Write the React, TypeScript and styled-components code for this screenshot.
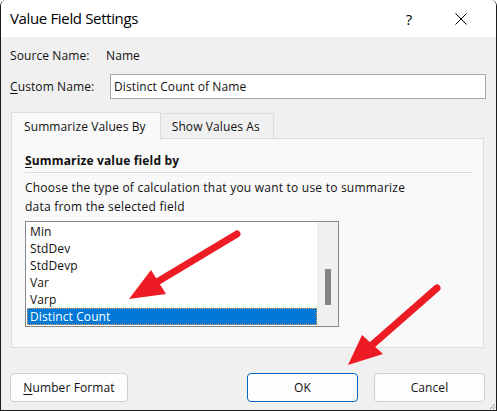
import React from 'react';
import styled, { createGlobalStyle } from 'styled-components';

const GlobalStyle = createGlobalStyle`
  html, body {
    margin: 0;
    padding: 0;
    background: #ffffff;
  }
  * {
    box-sizing: border-box;
  }
`;

const Window = styled.div`
  position: relative;
  width: 497px;
  height: 411px;
  display: flex;
  flex-direction: column;
  border: 1px solid #1c1c1c;
  border-top: none;
  border-radius: 6px 6px 0 0;
  overflow: hidden;
  font-family: 'Open Sans', 'Noto Sans', Arial, sans-serif;
  font-size: 12px;
  letter-spacing: 0.1px;
  color: #111;
`;

const TitleBar = styled.div`
  height: 37px;
  flex: none;
  display: flex;
  align-items: center;
  padding-left: 9px;
  background: #ffffff;
`;

const Title = styled.div`
  flex: 1;
  font-size: 15px;
  letter-spacing: -0.35px;
  color: #000;
  padding-bottom: 1px;
`;

const TitleButton = styled.div<{ $w: number }>`
  width: ${(p) => p.$w}px;
  height: 37px;
  display: flex;
  align-items: center;
  justify-content: center;
  font-size: 15px;
  color: #000;
`;

const Body = styled.div`
  flex: 1;
  display: flex;
  flex-direction: column;
  background: #f0f0f0;
  padding: 10px 10px 8px 9px;
`;

const FieldRow = styled.div<{ $h: number; $gap?: number }>`
  display: flex;
  align-items: center;
  height: ${(p) => p.$h}px;
  margin-top: ${(p) => p.$gap ?? 0}px;
`;

const Label = styled.div`
  width: 96px;
  flex: none;
`;

const Value = styled.div`
  flex: 1;
`;

const TextInput = styled.div`
  flex: 1;
  height: 25px;
  margin-left: 4px;
  display: flex;
  align-items: center;
  padding-left: 3px;
  background: #fff;
  border: 1px solid #a8a8a8;
`;

const Key = styled.span`
  text-decoration: underline;
  text-underline-offset: 2px;
`;

const TabStrip = styled.div`
  display: flex;
  align-items: flex-end;
  margin-top: 12px;
  height: 27px;
  padding-left: 1px;
`;

const Tab = styled.div<{ $active?: boolean }>`
  height: ${(p) => (p.$active ? 27 : 25)}px;
  display: flex;
  align-items: center;
  padding: ${(p) => (p.$active ? '0 14px 0 12px' : '0 13px 0 11px')};
  background: ${(p) => (p.$active ? '#f9f9f9' : '#f0f0f0')};
  border: 1px solid #dcdcdc;
  border-bottom: none;
  ${(p) => (p.$active ? 'margin-bottom: -1px; position: relative; z-index: 1; border-right: none;' : '')}
`;

const Panel = styled.div`
  height: 210px;
  margin-left: 1px;
  margin-right: 2px;
  background: #f9f9f9;
  border: 1px solid #dcdcdc;
  padding: 13px 10px 0 13px;
`;

const Heading = styled.div`
  font-weight: 700;
  letter-spacing: 0.15px;
  height: 17px;
  line-height: 17px;
  padding-bottom: 3px;
  box-sizing: content-box;
  border-bottom: 1px solid #d9d9d9;
`;

const Hint = styled.div`
  margin-top: 5px;
  line-height: 19px;
  letter-spacing: 0.22px;
  max-width: 392px;
`;

const ListBox = styled.div`
  margin-top: 5px;
  width: 314px;
  height: 106px;
  display: flex;
  background: #fff;
  border: 1px solid #828790;
  padding: 1px 0 0 1px;
`;

const Items = styled.div`
  flex: 1;
  display: flex;
  flex-direction: column;
`;

const Item = styled.div<{ $selected?: boolean }>`
  height: 17px;
  line-height: 17px;
  padding-left: 3px;
  ${(p) =>
    p.$selected
      ? 'background: #0078d7; color: #fff; outline: 1px dotted #f5a04c; outline-offset: -1px;'
      : ''}
`;

const ScrollTrack = styled.div`
  width: 21px;
  margin-top: -1px;
  background: #f0f0f0;
  display: flex;
  justify-content: center;
`;

const ScrollThumb = styled.div`
  width: 6px;
  height: 36px;
  margin-top: 47px;
  margin-left: 1px;
  background: #858585;
`;

const ButtonRow = styled.div`
  display: flex;
  align-items: center;
  gap: 16px;
  margin-top: 25px;
  margin-right: 1px;
`;

const Spacer = styled.div`
  flex: 1;
`;

const Button = styled.div<{ $w: number; $primary?: boolean }>`
  width: ${(p) => p.$w}px;
  height: 29px;
  display: flex;
  align-items: center;
  justify-content: center;
  background: #fdfdfd;
  border: 1px solid ${(p) => (p.$primary ? '#0067c0' : '#d0d0d0')};
  border-radius: 4px;
`;

const Overlay = styled.svg`
  position: absolute;
  left: -1px;
  top: 0;
  pointer-events: none;
`;

const Grip = styled.svg`
  position: absolute;
  right: 0;
  bottom: 0;
`;

const items = ['Min', 'StdDev', 'StdDevp', 'Var', 'Varp', 'Distinct Count'];

const App: React.FC = () => {
  return (
    <Window>
      <GlobalStyle />
      <TitleBar>
        <Title>Value Field Settings</Title>
        <TitleButton $w={34}>?</TitleButton>
        <TitleButton $w={70}>
          <svg width="12" height="12" viewBox="0 0 12 12">
            <path d="M0.5 0.5 L11.5 11.5 M11.5 0.5 L0.5 11.5" stroke="#000" strokeWidth="1" />
          </svg>
        </TitleButton>
      </TitleBar>
      <Body>
        <FieldRow $h={16}>
          <Label>Source Name:</Label>
          <Value>Name</Value>
        </FieldRow>
        <FieldRow $h={25} $gap={11}>
          <Label>
            <Key>C</Key>ustom Name:
          </Label>
          <TextInput>Distinct Count of Name</TextInput>
        </FieldRow>
        <TabStrip>
          <Tab $active>Summarize Values By</Tab>
          <Tab>Show Values As</Tab>
        </TabStrip>
        <Panel>
          <Heading>
            <Key>S</Key>ummarize value field by
          </Heading>
          <Hint>Choose the type of calculation that you want to use to summarize data from the selected field</Hint>
          <ListBox>
            <Items>
              {items.map((it) => (
                <Item key={it} $selected={it === 'Distinct Count'}>
                  {it}
                </Item>
              ))}
            </Items>
            <ScrollTrack>
              <ScrollThumb />
            </ScrollTrack>
          </ListBox>
        </Panel>
        <ButtonRow>
          <Button $w={118}>
            <span>
              <Key>N</Key>umber Format
            </span>
          </Button>
          <Spacer />
          <Button $w={111} $primary>
            OK
          </Button>
          <Button $w={111}>Cancel</Button>
        </ButtonRow>
      </Body>
      <Grip width="8" height="8" viewBox="0 0 8 8">
        <path d="M7 2 L2 7 M7 5 L5 7" stroke="#9a9a9a" strokeWidth="1" />
      </Grip>
      <Overlay width="497" height="411" viewBox="0 0 497 411">
        <line x1="237" y1="234" x2="152" y2="285" stroke="#ed1c24" strokeWidth="7" strokeLinecap="round" />
        <polygon points="129,299 151,270 166,294" fill="#ed1c24" />
        <line x1="437" y1="288" x2="372" y2="345" stroke="#ed1c24" strokeWidth="7" strokeLinecap="round" />
        <polygon points="348,365 362,335 383,354" fill="#ed1c24" />
      </Overlay>
    </Window>
  );
};

export default App;
